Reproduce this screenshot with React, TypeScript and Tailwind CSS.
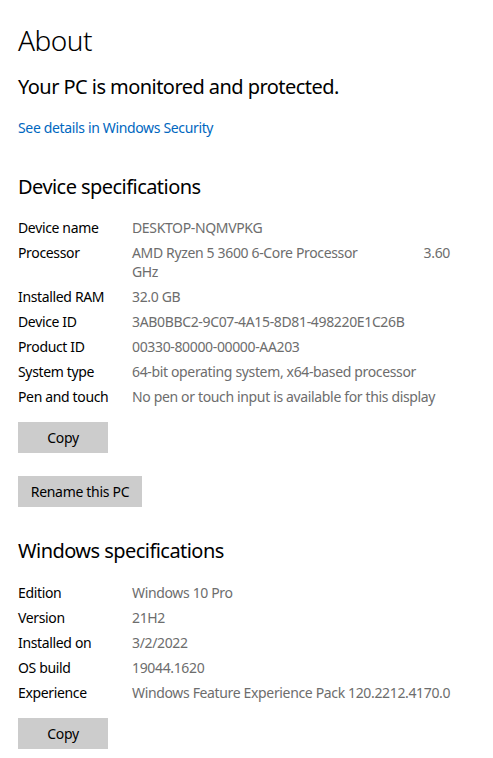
import React from "react";

const F = { fontFamily: '"Segoe UI", "Noto Sans", "Open Sans", sans-serif' };

function Row({ label, children }: { label: string; children: React.ReactNode }) {
  return (
    <div className="flex text-[14px] leading-[19px] mb-[6px] tracking-[-0.35px]">
      <div className="w-[114px] shrink-0 text-black">{label}</div>
      <div className="text-[#6d6d6d]">{children}</div>
    </div>
  );
}

function Btn({ children, w }: { children: React.ReactNode; w: string }) {
  return (
    <div className={`h-[31px] bg-[#cccccc] flex items-center justify-center text-[14px] tracking-[-0.3px] text-black ${w}`}>
      {children}
    </div>
  );
}

export default function App() {
  return (
    <div className="w-[493px] h-[758px] bg-white overflow-hidden px-[18px]" style={F}>
      <div className="pt-[22px] text-[28px] leading-[36px] font-light tracking-[-0.5px] text-black">About</div>
      <div className="mt-[16px] text-[20px] leading-[26px] tracking-[-0.55px] text-black">Your PC is monitored and protected.</div>
      <div className="mt-[18px] text-[14px] leading-[19px] tracking-[-0.35px] text-[#0067c0]">See details in Windows Security</div>
      <div className="mt-[37px] text-[20px] leading-[26px] tracking-[-0.55px] text-black">Device specifications</div>
      <div className="mt-[18px]">
        <Row label="Device name">DESKTOP-NQMVPKG</Row>
        <Row label="Processor">
          <div className="w-[318px] flex justify-between">
            <span>AMD Ryzen 5 3600 6-Core Processor</span>
            <span>3.60</span>
          </div>
          <div>GHz</div>
        </Row>
        <Row label="Installed RAM">32.0 GB</Row>
        <Row label="Device ID">3AB0BBC2-9C07-4A15-8D81-498220E1C26B</Row>
        <Row label="Product ID">00330-80000-00000-AA203</Row>
        <Row label="System type">64-bit operating system, x64-based processor</Row>
        <Row label="Pen and touch">No pen or touch input is available for this display</Row>
      </div>
      <div className="mt-[16px]">
        <Btn w="w-[90px]">Copy</Btn>
      </div>
      <div className="mt-[23px]">
        <Btn w="w-[124px]">Rename this PC</Btn>
      </div>
      <div className="mt-[31px] text-[20px] leading-[26px] tracking-[-0.55px] text-black">Windows specifications</div>
      <div className="mt-[19px]">
        <Row label="Edition">Windows 10 Pro</Row>
        <Row label="Version">21H2</Row>
        <Row label="Installed on">3/2/2022</Row>
        <Row label="OS build">19044.1620</Row>
        <Row label="Experience">Windows Feature Experience Pack 120.2212.4170.0</Row>
      </div>
      <div className="mt-[16px]">
        <Btn w="w-[90px]">Copy</Btn>
      </div>
    </div>
  );
}
